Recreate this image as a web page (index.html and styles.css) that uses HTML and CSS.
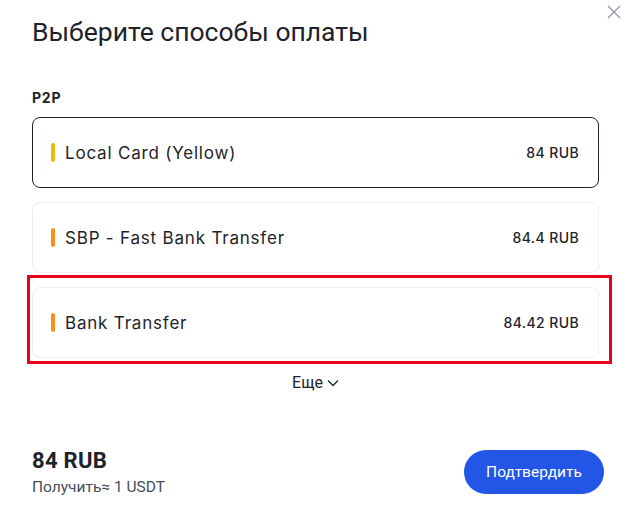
FILE: index.html
```html
<!DOCTYPE html>
<html lang="ru">
<head>
  <meta charset="UTF-8"/>
  <meta name="viewport" content="width=device-width, initial-scale=1.0"/>
  <title>Способы оплаты</title>
  <link rel="stylesheet" href="styles.css">
</head>
<body>
  <div class="modal">
    <button class="close" aria-label="Закрыть">
      <svg width="14" height="14" viewBox="0 0 14 14"><path d="M1 1L13 13M13 1L1 13" stroke="#8f959e" stroke-width="1.3" fill="none"/></svg>
    </button>
    <h1 class="title">Выберите способы оплаты</h1>

    <div class="group-label">P2P</div>
    <div class="methods">
      <div class="method selected">
        <span class="bar yellow"></span>
        <span class="name">Local Card (Yellow)</span>
        <span class="price">84 RUB</span>
      </div>
      <div class="method">
        <span class="bar orange"></span>
        <span class="name">SBP - Fast Bank Transfer</span>
        <span class="price">84.4 RUB</span>
      </div>
      <div class="method marked">
        <span class="bar orange"></span>
        <span class="name">Bank Transfer</span>
        <span class="price">84.42 RUB</span>
      </div>
    </div>
    <div class="more">Еще
      <svg width="12" height="8" viewBox="0 0 12 8"><path d="M1 1.5L6 6.5L11 1.5" stroke="#1e2329" stroke-width="1.3" fill="none"/></svg>
    </div>

    <div class="footer">
      <div class="total">
        <div class="amount">84 RUB</div>
        <div class="receive">Получить≈ 1 USDT</div>
      </div>
      <button class="confirm">Подтвердить</button>
    </div>
  </div>
</body>
</html>
```

FILE: styles.css
```css
body { margin: 0; background: #fff; color: #1e2329; font-family: Roboto, "Liberation Sans", sans-serif; }
.modal { position: relative; width: 567px; padding: 16px 42px 0 32px; }
.close { position: absolute; top: 5px; right: 20px; padding: 0; border: none; background: none; cursor: pointer; }
.title { margin: 0; font-size: 26.5px; line-height: 31px; font-weight: 400; }
.group-label { margin-top: 41px; font-family: Inter, sans-serif; font-weight: 700; font-size: 14px; line-height: 20px; letter-spacing: 0.8px; }
.methods { display: flex; flex-direction: column; gap: 14px; margin-top: 9px; }
.method { position: relative; display: flex; align-items: center; height: 71px; box-sizing: border-box; padding: 0 19px 0 18px; border: 1px solid #eceef1; border-radius: 8px; font-family: Inter, sans-serif; }
.method.selected { border-color: #1e2329; }
.method.marked::after { content: ""; position: absolute; left: -6px; right: -14px; top: -13px; bottom: -7px; border: 3px solid #ea0020; }
.bar { width: 4px; height: 19px; border-radius: 2px; margin-right: 10px; }
.yellow { background: #f0b90b; }
.orange { background: #ff8b1a; }
.name { flex: 1; font-size: 17px; letter-spacing: 0.8px; }
.price { font-size: 14px; font-weight: 500; letter-spacing: 0.4px; }
.more { display: flex; align-items: center; justify-content: center; gap: 4px; margin-top: 15px; font-size: 16px; line-height: 19px; }
.footer { display: flex; justify-content: space-between; align-items: center; margin-top: 56px; }
.amount { font-size: 22px; font-weight: 700; line-height: 26px; letter-spacing: 0.3px; }
.receive { margin-top: 4px; font-size: 15.5px; color: #474d57; }
.confirm { width: 140px; height: 44px; margin-right: -5px; border: none; border-radius: 22px; background: #2355e6; color: #fff; font-family: Roboto, sans-serif; font-size: 15.5px; cursor: pointer; }
```
